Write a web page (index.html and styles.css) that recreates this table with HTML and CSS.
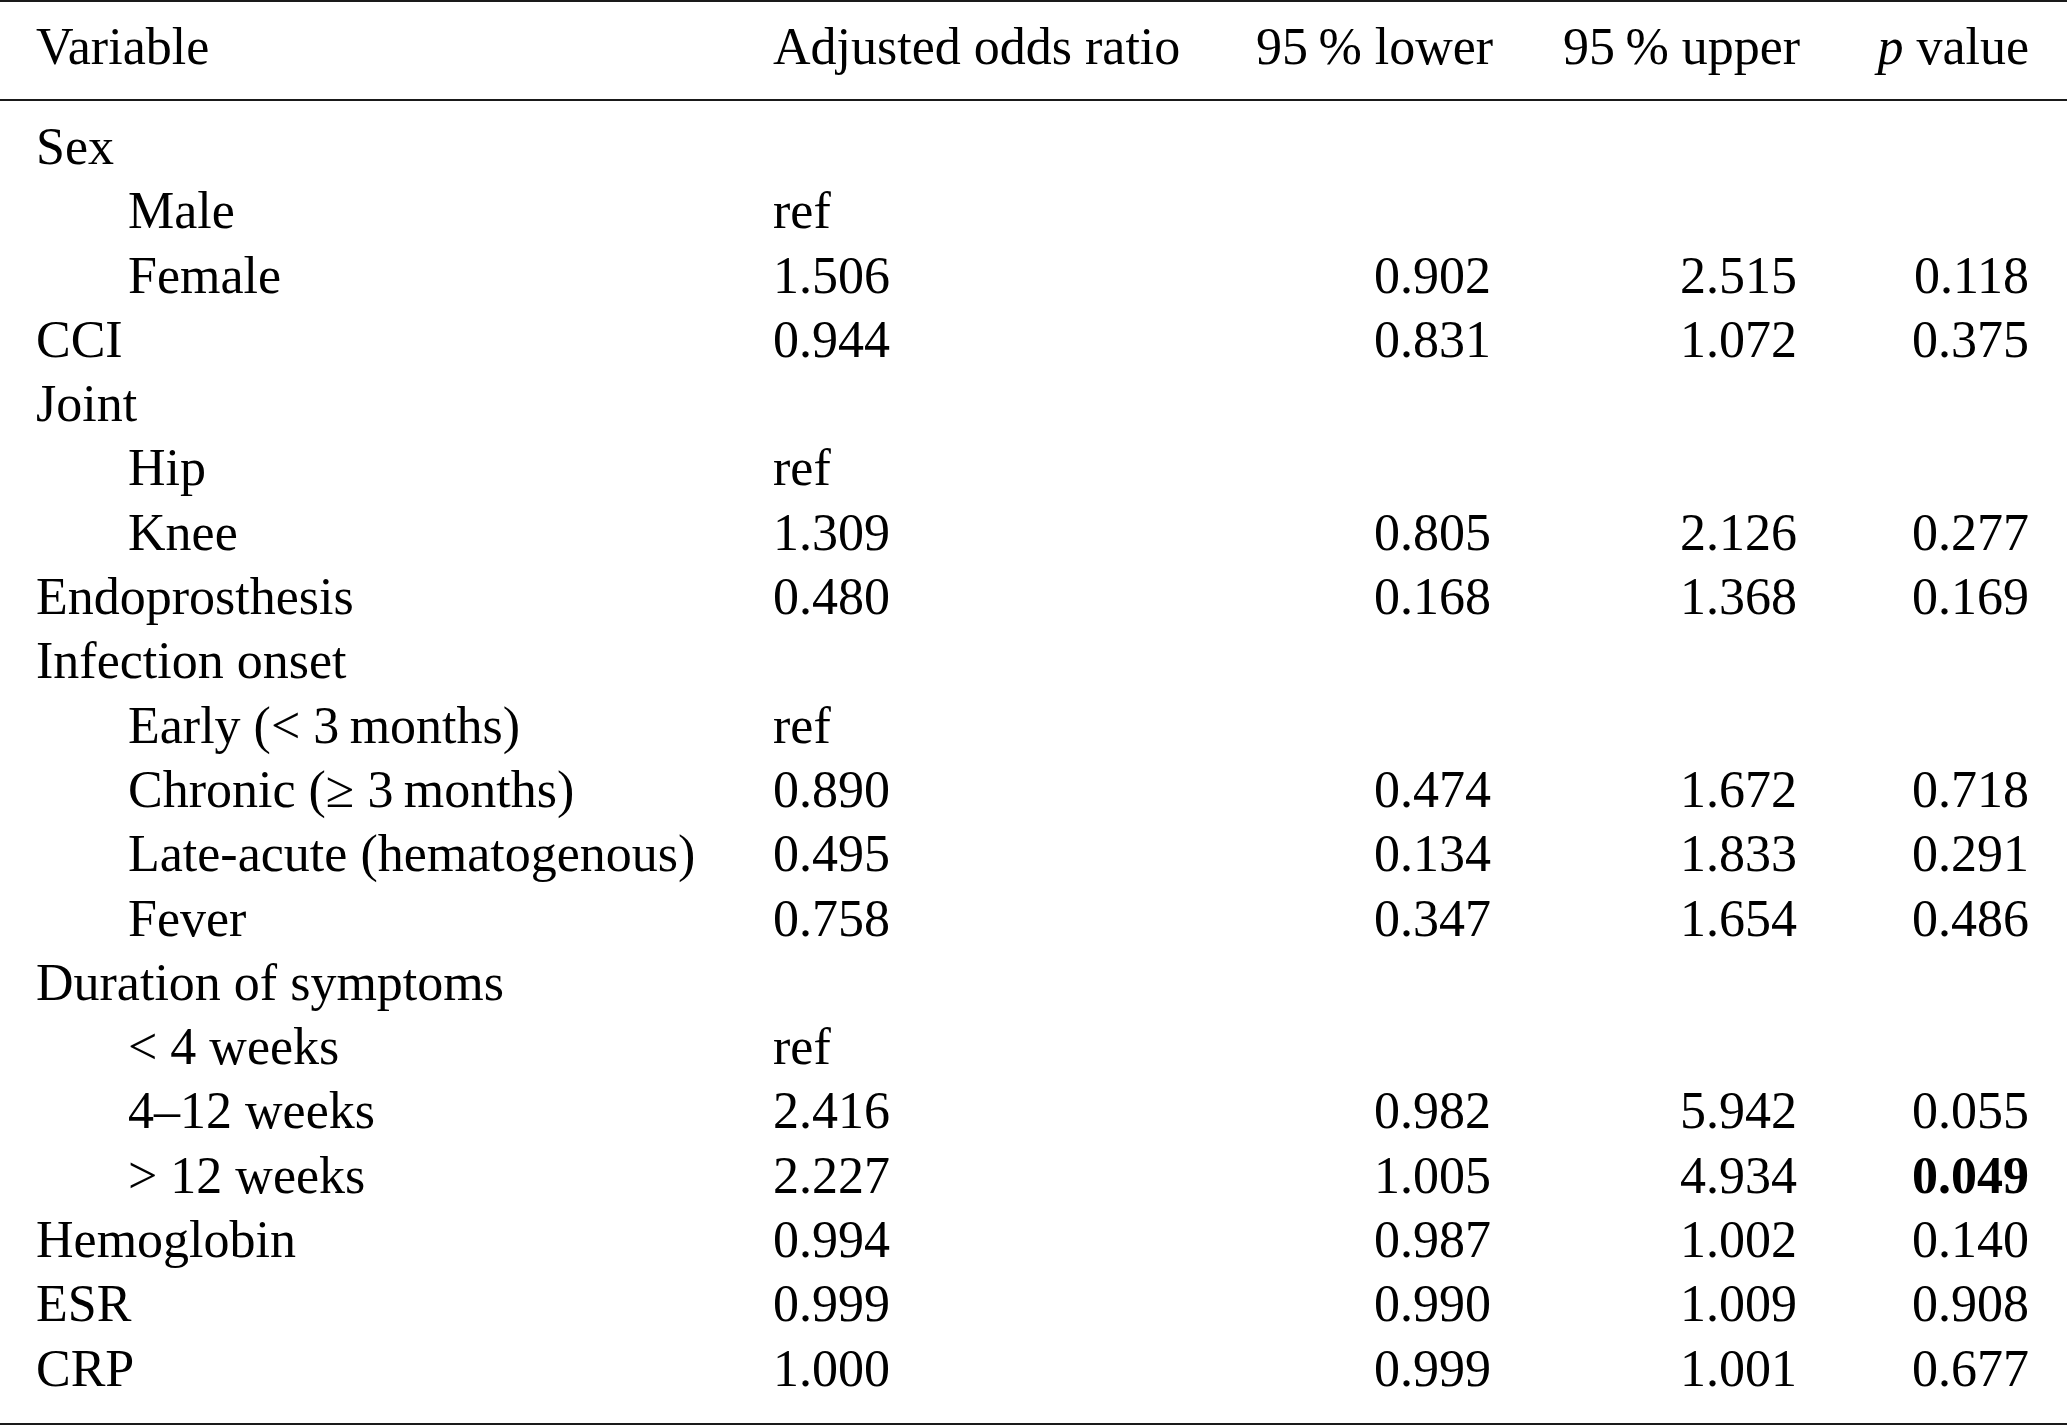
FILE: index.html
```html
<!DOCTYPE html>
<html lang="en">
<head>
<meta charset="utf-8">
<title>Adjusted odds ratios</title>
<link rel="stylesheet" href="styles.css">
</head>
<body>
<table class="tbl">
  <colgroup>
    <col class="c-var">
    <col class="c-or">
    <col class="c-lo">
    <col class="c-up">
    <col class="c-p">
  </colgroup>
  <thead>
    <tr>
      <th class="l first">Variable</th>
      <th class="l">Adjusted odds ratio</th>
      <th class="r">95&thinsp;% lower</th>
      <th class="r">95&thinsp;% upper</th>
      <th class="r last"><i>p</i> value</th>
    </tr>
  </thead>
  <tbody>
    <tr class="top"><td class="first">Sex</td><td></td><td class="r"></td><td class="r"></td><td class="r last"></td></tr>
    <tr><td class="first sub">Male</td><td>ref</td><td class="r"></td><td class="r"></td><td class="r last"></td></tr>
    <tr><td class="first sub">Female</td><td>1.506</td><td class="r">0.902</td><td class="r">2.515</td><td class="r last">0.118</td></tr>
    <tr><td class="first">CCI</td><td>0.944</td><td class="r">0.831</td><td class="r">1.072</td><td class="r last">0.375</td></tr>
    <tr><td class="first">Joint</td><td></td><td class="r"></td><td class="r"></td><td class="r last"></td></tr>
    <tr><td class="first sub">Hip</td><td>ref</td><td class="r"></td><td class="r"></td><td class="r last"></td></tr>
    <tr><td class="first sub">Knee</td><td>1.309</td><td class="r">0.805</td><td class="r">2.126</td><td class="r last">0.277</td></tr>
    <tr><td class="first">Endoprosthesis</td><td>0.480</td><td class="r">0.168</td><td class="r">1.368</td><td class="r last">0.169</td></tr>
    <tr><td class="first">Infection onset</td><td></td><td class="r"></td><td class="r"></td><td class="r last"></td></tr>
    <tr><td class="first sub">Early (&lt; 3&thinsp;months)</td><td>ref</td><td class="r"></td><td class="r"></td><td class="r last"></td></tr>
    <tr><td class="first sub">Chronic (&ge; 3&thinsp;months)</td><td>0.890</td><td class="r">0.474</td><td class="r">1.672</td><td class="r last">0.718</td></tr>
    <tr><td class="first sub">Late-acute (hematogenous)</td><td>0.495</td><td class="r">0.134</td><td class="r">1.833</td><td class="r last">0.291</td></tr>
    <tr><td class="first sub">Fever</td><td>0.758</td><td class="r">0.347</td><td class="r">1.654</td><td class="r last">0.486</td></tr>
    <tr><td class="first">Duration of symptoms</td><td></td><td class="r"></td><td class="r"></td><td class="r last"></td></tr>
    <tr><td class="first sub">&lt; 4 weeks</td><td>ref</td><td class="r"></td><td class="r"></td><td class="r last"></td></tr>
    <tr><td class="first sub">4&ndash;12 weeks</td><td>2.416</td><td class="r">0.982</td><td class="r">5.942</td><td class="r last">0.055</td></tr>
    <tr><td class="first sub">&gt; 12 weeks</td><td>2.227</td><td class="r">1.005</td><td class="r">4.934</td><td class="r last"><b>0.049</b></td></tr>
    <tr><td class="first">Hemoglobin</td><td>0.994</td><td class="r">0.987</td><td class="r">1.002</td><td class="r last">0.140</td></tr>
    <tr><td class="first">ESR</td><td>0.999</td><td class="r">0.990</td><td class="r">1.009</td><td class="r last">0.908</td></tr>
    <tr class="bottom"><td class="first">CRP</td><td>1.000</td><td class="r">0.999</td><td class="r">1.001</td><td class="r last">0.677</td></tr>
  </tbody>
</table>
</body>
</html>
```
FILE: styles.css
```css
html, body {
  margin: 0;
  padding: 0;
  background: #ffffff;
}

body {
  font-family: "Liberation Serif", "Times New Roman", serif;
  font-size: 52px;
  color: #000000;
  overflow: hidden;
}

.tbl {
  width: 2067px;
  table-layout: fixed;
  border-collapse: separate;
  border-spacing: 0;
  border-top: 2px solid #1a1a1a;
  border-bottom: 2px solid #1a1a1a;
}

.c-var { width: 737px; }
.c-or  { width: 483px; }
.c-lo  { width: 307px; }
.c-up  { width: 306px; }
.c-p   { width: 234px; }

.tbl th,
.tbl td {
  font-weight: normal;
  line-height: 64.3px;
  padding: 0 36px;
  white-space: nowrap;
  vertical-align: baseline;
}

.tbl th {
  padding-top: 13px;
  padding-bottom: 19.7px;
  border-bottom: 2px solid #1a1a1a;
}

.tbl .l { text-align: left; }
.tbl .r { text-align: right; }

.tbl .first { padding-left: 36px; }
.tbl .last { padding-right: 38px; }
.tbl td.sub { padding-left: 128px; }

.tbl tr.top td { padding-top: 14px; }
.tbl tr.bottom td { padding-bottom: 22px; }

.tbl b { font-weight: bold; }
.tbl i { font-style: italic; }
```
